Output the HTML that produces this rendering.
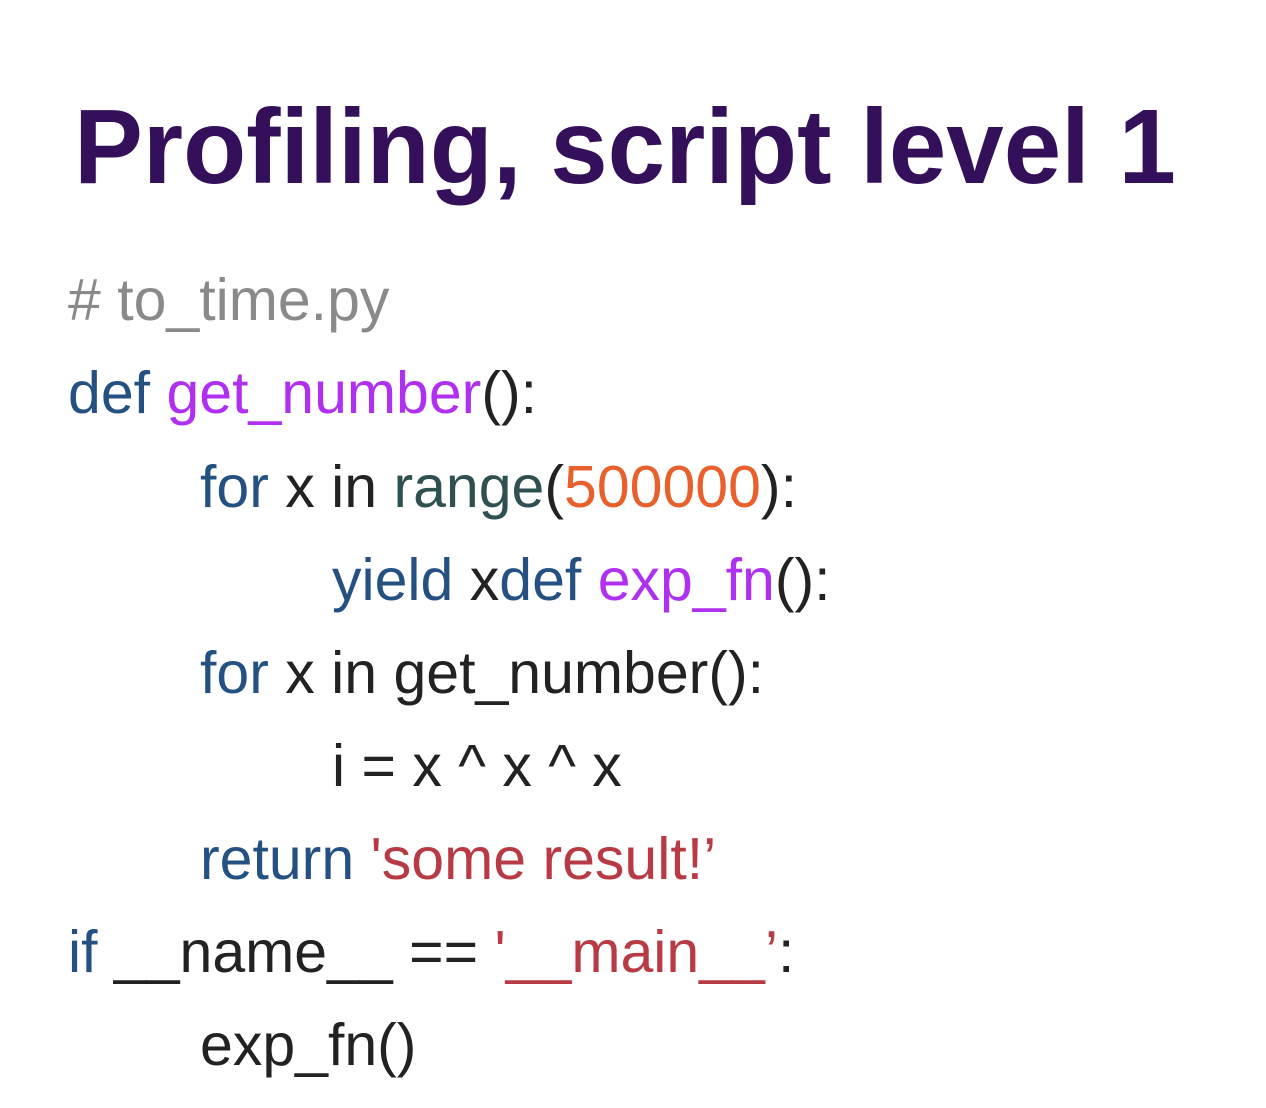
<!DOCTYPE html>
<html><head><meta charset="utf-8"><style>
html,body{margin:0;padding:0;background:#fff;width:1266px;height:1108px;overflow:hidden}
svg{display:block}
text{font-family:"Liberation Sans",Arial,sans-serif;font-size:59px;fill:#222}
.k{fill:#245082}.f{fill:#b030f0}.n{fill:#e8602c}.b{fill:#2f5050}.s{fill:#b83a44}.c{fill:#8a8a8a}
</style></head><body>
<svg width="1266" height="1108" xmlns="http://www.w3.org/2000/svg">
<text x="74" y="183" textLength="1102" lengthAdjust="spacingAndGlyphs" style="font-weight:bold;font-size:106px;fill:#34105a">Profiling, script level 1</text>
<text x="68" y="320" class="c" xml:space="preserve" style="fill:#8a8a8a"># to_time.py</text>
<text x="68" y="413" xml:space="preserve"><tspan class="k">def</tspan> <tspan class="f">get_number</tspan>():</text>
<text x="200" y="507" xml:space="preserve"><tspan class="k">for</tspan> x in <tspan class="b">range</tspan>(<tspan class="n">500000</tspan>):</text>
<text x="332" y="600" xml:space="preserve"><tspan class="k">yield</tspan> x<tspan class="k">def</tspan> <tspan class="f">exp_fn</tspan>():</text>
<text x="200" y="693" xml:space="preserve"><tspan class="k">for</tspan> x in get_number():</text>
<text x="332" y="786" xml:space="preserve">i = x ^ x ^ x</text>
<text x="200" y="879" xml:space="preserve"><tspan class="k">return</tspan> <tspan class="s">'some result!’</tspan></text>
<text x="68" y="972" xml:space="preserve"><tspan class="k">if</tspan> __name__ == <tspan class="s">'__main__’</tspan>:</text>
<text x="200" y="1065" xml:space="preserve">exp_fn()</text>
</svg>
</body></html>
